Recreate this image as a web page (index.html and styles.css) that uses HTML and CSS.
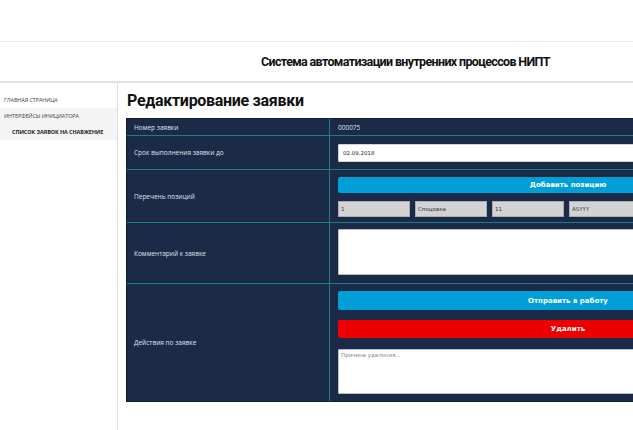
FILE: index.html
```html
<!DOCTYPE html>
<html lang="ru">
<head>
<meta charset="utf-8">
<link rel="stylesheet" href="styles.css">
</head>
<body>
<div class="topbar"></div>
<header class="header">
  <div class="header-title">Система автоматизации внутренних процессов НИПТ</div>
  <div class="header-user">Здравствуйте</div>
</header>
<div class="main">
  <nav class="sidebar">
    <div class="nav-item">ГЛАВНАЯ СТРАНИЦА</div>
    <div class="nav-item nav-group">ИНТЕРФЕЙСЫ ИНИЦИАТОРА</div>
    <div class="nav-item nav-sub">СПИСОК ЗАЯВОК НА СНАБЖЕНИЕ</div>
  </nav>
  <section class="content">
    <h1 class="page-title">Редактирование заявки</h1>
    <div class="form">
      <div class="row r1">
        <div class="label">Номер заявки</div>
        <div class="value">000075</div>
      </div>
      <div class="row r2">
        <div class="label">Срок выполнения заявки до</div>
        <div class="value"><input class="input date" value="02.09.2018"></div>
      </div>
      <div class="row r3">
        <div class="label">Перечень позиций</div>
        <div class="value stack">
          <button class="btn btn-blue small">Добавить позицию</button>
          <div class="positions">
            <input class="pos" value="1">
            <input class="pos" value="Спецовка">
            <input class="pos" value="11">
            <input class="pos" value="ASYYY">
          </div>
        </div>
      </div>
      <div class="row r4">
        <div class="label">Комментарий к заявке</div>
        <div class="value"><textarea class="area comment"></textarea></div>
      </div>
      <div class="row r5">
        <div class="label">Действия по заявке</div>
        <div class="value stack2">
          <button class="btn btn-blue">Отправить в работу</button>
          <button class="btn btn-red">Удалить</button>
          <textarea class="area reason" placeholder="Причина удаления..."></textarea>
        </div>
      </div>
    </div>
  </section>
</div>
</body>
</html>
```

FILE: styles.css
```css
* { box-sizing: border-box; }
html, body { margin: 0; padding: 0; }
body {
  width: 633px;
  height: 430px;
  overflow: hidden;
  background: #fff;
  font-family: Roboto, "Liberation Sans", Arial, sans-serif;
}
.topbar {
  height: 42px;
  border-bottom: 1px solid #ececec;
}
.header {
  height: 41px;
  border-bottom: 2px solid #e2e2e2;
  display: flex;
  align-items: center;
  overflow: hidden;
}
.header-title {
  margin-left: 261px;
  font-size: 12.5px;
  font-weight: 700;
  color: #111;
  letter-spacing: -0.65px;
  white-space: nowrap;
  flex: none;
}
.header-user {
  margin-left: 85px;
  font-size: 7px;
  color: #555;
  white-space: nowrap;
  margin-top: -4px;
  flex: none;
}
.main {
  display: flex;
  height: 347px;
}
.sidebar {
  width: 118px;
  flex: none;
  border-right: 1px solid #e0e0e0;
  padding-top: 9px;
  font-family: "Open Sans", "Liberation Sans", sans-serif;
}
.nav-item {
  height: 16px;
  line-height: 16px;
  font-size: 5.5px;
  color: #444;
  padding-left: 4px;
  white-space: nowrap;
  letter-spacing: -0.1px;
}
.nav-group { background: #f4f4f4; }
.nav-sub {
  background: #f4f4f4;
  padding-left: 12px;
  font-weight: 700;
  color: #222;
}
.content {
  flex: 1;
  padding-left: 8px;
  min-width: 0;
}
.page-title {
  margin: 8px 0 0 1px;
  height: 27px;
  font-size: 16px;
  font-weight: 700;
  color: #111;
  letter-spacing: -0.3px;
  white-space: nowrap;
}
.form {
  width: 690px;
  background: #1b2a47;
  border: 1px solid #111c33;
  font-family: "Open Sans", "DejaVu Sans", sans-serif;
  color: #dfe4ee;
}
.row {
  display: flex;
  border-top: 1px solid #1b7d86;
}
.row:first-child { border-top: none; }
.label {
  width: 203px;
  flex: none;
  border-right: 1px solid #1b7d86;
  padding-left: 7px;
  font-size: 6.5px;
  display: flex;
  align-items: center;
}
.value {
  flex: 1;
  padding: 0 8px;
  font-size: 6.5px;
  display: flex;
  align-items: center;
}
.r1 { height: 16px; }
.r2 { height: 34px; }
.r3 { height: 53px; }
.r4 { height: 61px; }
.r5 { height: 118px; }
.input, .pos, .area {
  font-family: "DejaVu Sans", sans-serif;
  font-size: 5.5px;
  outline: none;
}
.input.date {
  width: 460px;
  height: 18px;
  background: #fff;
  border: 1px solid #cfd4dc;
  border-radius: 1px;
  padding: 0 4px;
  color: #222;
}
.stack {
  flex-direction: column;
  align-items: stretch;
  justify-content: flex-start;
  padding-top: 7px;
  gap: 8px;
}
.btn {
  width: 460px;
  height: 19px;
  border: none;
  border-radius: 2px;
  color: #fff;
  font-family: "DejaVu Sans", sans-serif;
  font-size: 7px;
  font-weight: 700;
  padding: 0;
}
.btn.small { height: 16px; }
.btn-blue { background: #019fd8; }
.btn-red { background: #ee0000; }
.positions {
  display: flex;
  gap: 5px;
  width: 460px;
}
.pos {
  width: 72px;
  height: 16px;
  background: #d3d3d3;
  border: 1px solid #a9adb3;
  padding: 0 2px;
  color: #333;
}
.area {
  width: 460px;
  resize: none;
  background: #fff;
  border: 1px solid #b7bcc6;
  border-radius: 1px;
  padding: 2px;
  color: #222;
}
.comment { height: 46px; margin-top: -2px; }
.stack2 {
  flex-direction: column;
  align-items: stretch;
  justify-content: flex-start;
  padding-top: 7px;
}
.stack2 .btn-red { margin-top: 10px; height: 18px; }
.reason {
  margin-top: 11px;
  height: 45px;
}
.reason::placeholder { color: #888; }
```
